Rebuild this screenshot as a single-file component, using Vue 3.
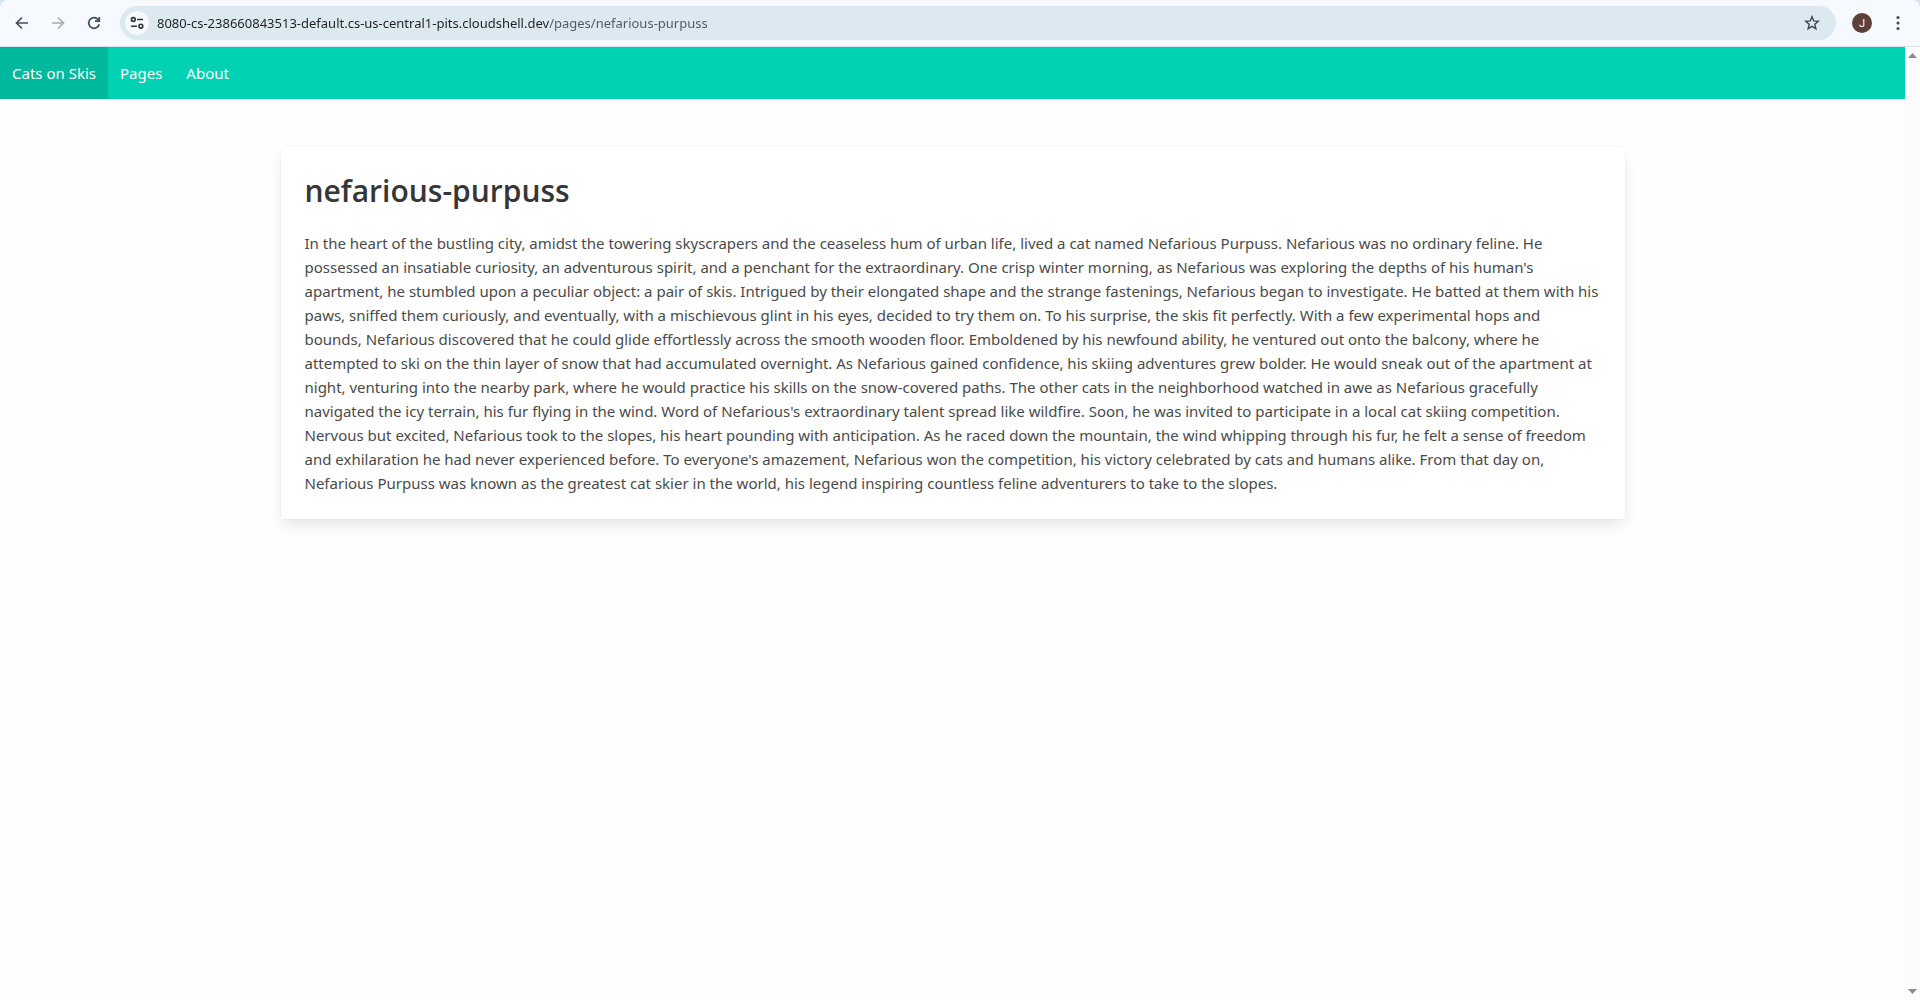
<script setup>
import { ref } from 'vue'

const url = ref('8080-cs-238660843513-default.cs-us-central1-pits.cloudshell.dev/pages/nefarious-purpuss')

const storyLines = [
  'In the heart of the bustling city, amidst the towering skyscrapers and the ceaseless hum of urban life, lived a cat named Nefarious Purpuss. Nefarious was no ordinary feline. He',
  "possessed an insatiable curiosity, an adventurous spirit, and a penchant for the extraordinary. One crisp winter morning, as Nefarious was exploring the depths of his human's",
  'apartment, he stumbled upon a peculiar object: a pair of skis. Intrigued by their elongated shape and the strange fastenings, Nefarious began to investigate. He batted at them with his',
  'paws, sniffed them curiously, and eventually, with a mischievous glint in his eyes, decided to try them on. To his surprise, the skis fit perfectly. With a few experimental hops and',
  'bounds, Nefarious discovered that he could glide effortlessly across the smooth wooden floor. Emboldened by his newfound ability, he ventured out onto the balcony, where he',
  'attempted to ski on the thin layer of snow that had accumulated overnight. As Nefarious gained confidence, his skiing adventures grew bolder. He would sneak out of the apartment at',
  'night, venturing into the nearby park, where he would practice his skills on the snow-covered paths. The other cats in the neighborhood watched in awe as Nefarious gracefully',
  "navigated the icy terrain, his fur flying in the wind. Word of Nefarious's extraordinary talent spread like wildfire. Soon, he was invited to participate in a local cat skiing competition.",
  'Nervous but excited, Nefarious took to the slopes, his heart pounding with anticipation. As he raced down the mountain, the wind whipping through his fur, he felt a sense of freedom',
  "and exhilaration he had never experienced before. To everyone's amazement, Nefarious won the competition, his victory celebrated by cats and humans alike. From that day on,",
  'Nefarious Purpuss was known as the greatest cat skier in the world, his legend inspiring countless feline adventurers to take to the slopes.',
]
</script>

<template>
  <div class="browser">
    <div class="frame">
      <header class="toolbar">
        <button class="tool" type="button" aria-label="Back">
          <svg viewBox="0 0 16 16" width="16" height="16" fill="none" stroke="#40515c" stroke-width="1.7">
            <path d="M14 8H3M8 2.5 2.5 8 8 13.5" />
          </svg>
        </button>
        <button class="tool" type="button" aria-label="Forward" disabled>
          <svg viewBox="0 0 16 16" width="16" height="16" fill="none" stroke="#a9adb1" stroke-width="1.7">
            <path d="M2 8h11M8 2.5 13.5 8 8 13.5" />
          </svg>
        </button>
        <button class="tool" type="button" aria-label="Reload">
          <svg viewBox="0 0 16 16" width="16" height="16" fill="none" stroke="#40515c" stroke-width="1.7">
            <path d="M13.2 9.2A5.3 5.3 0 1 1 12 4.5L13.3 6M13.3 2v4.2H9" />
          </svg>
        </button>
        <div class="omnibox">
          <button class="site-info" type="button" aria-label="View site information">
            <svg viewBox="0 0 16 16" width="16" height="16" fill="none" stroke="#303437" stroke-width="1.6">
              <circle cx="4.3" cy="4.5" r="1.9" />
              <path d="M8 4.5h6M2 11.2h6" />
              <circle cx="11.9" cy="11.2" r="1.9" />
            </svg>
          </button>
          <input v-model="url" class="address" type="text" aria-label="Address and search bar" spellcheck="false" />
          <button class="star" type="button" aria-label="Bookmark this tab">
            <svg viewBox="0 0 18 18" width="18" height="18" fill="none" stroke="#40474c" stroke-width="1.4">
              <path d="m9 2.7 1.7 4.2 4.6.4-3.5 3 1.1 4.5L9 12.4l-3.9 2.4 1.1-4.5-3.5-3 4.6-.4z" />
            </svg>
          </button>
        </div>
        <button class="profile" type="button" aria-label="Profile">J</button>
        <button class="menu" type="button" aria-label="Menu">
          <svg viewBox="0 0 16 16" width="16" height="16" fill="#40515c">
            <circle cx="8" cy="2.5" r="1.6" />
            <circle cx="8" cy="8" r="1.6" />
            <circle cx="8" cy="13.5" r="1.6" />
          </svg>
        </button>
      </header>
    </div>

    <div class="viewport">
      <div class="page">
        <nav class="navbar">
          <a class="nav-item active" href="/">Cats on Skis</a>
          <a class="nav-item" href="/pages">Pages</a>
          <a class="nav-item" href="/about">About</a>
        </nav>
        <main class="section">
          <article class="card">
            <h1 class="title">nefarious-purpuss</h1>
            <p class="story">
              <span v-for="line in storyLines" :key="line" class="line">{{ line }}</span>
            </p>
          </article>
        </main>
      </div>
      <div class="scrollbar">
        <button class="scroll-button" type="button" aria-label="Scroll up">
          <svg viewBox="0 0 9 5" width="9" height="5" fill="#8b8b8b"><path d="M0 5 4.5 0 9 5z" /></svg>
        </button>
        <button class="scroll-button" type="button" aria-label="Scroll down">
          <svg viewBox="0 0 9 5" width="9" height="5" fill="#8b8b8b"><path d="M0 0 4.5 5 9 0z" /></svg>
        </button>
      </div>
    </div>
  </div>
</template>

<style>
body {
  background: #fefefe;
}
</style>

<style scoped>
.browser {
  display: flex;
  flex-direction: column;
  min-height: 100vh;
  font-family: 'Segoe UI', 'Noto Sans', 'Open Sans', sans-serif;
}

button {
  display: flex;
  align-items: center;
  justify-content: center;
  flex: none;
  padding: 0;
  border: 0;
  background: none;
  font-family: inherit;
}

.frame {
  background: #d3e5f2;
}

.toolbar {
  display: flex;
  align-items: center;
  box-sizing: border-box;
  height: 47px;
  padding: 0 12px 0 4px;
  border-bottom: 1px solid #d9e2e9;
  border-radius: 8px 8px 0 0;
  background: #f6f9fe;
}

.tool {
  width: 36px;
  height: 34px;
}

.omnibox {
  display: flex;
  align-items: center;
  flex: 1;
  min-width: 0;
  height: 34px;
  margin-left: 8px;
  padding: 0 15px 0 5px;
  border-radius: 17px;
  background: #dde9f1;
}

.site-info {
  width: 24px;
  height: 24px;
  border-radius: 50%;
  background: #f6f9fe;
}

/* The host is drawn dark and the path after it lighter. */
.address {
  flex: 1;
  min-width: 0;
  height: 24px;
  margin-left: 8px;
  padding: 0;
  border: 0;
  outline: 0;
  color: #1f1f1f;
  background: linear-gradient(to right, #1f1f1f 392px, #50575c 392px);
  background-clip: text;
  -webkit-text-fill-color: transparent;
  font-family: inherit;
  font-size: 13px;
}

.star {
  width: 18px;
  height: 18px;
}

.profile {
  width: 20px;
  height: 20px;
  margin-left: 16px;
  border-radius: 50%;
  color: #fff;
  background: #5d4037;
  font-family: Roboto, sans-serif;
  font-size: 11px;
}

.menu {
  width: 20px;
  height: 24px;
  margin-left: 16px;
}

.viewport {
  display: flex;
  flex: 1;
}

.page {
  flex: 1;
  min-width: 0;
}

.navbar {
  display: flex;
  height: 52px;
  background: #00d1b2;
}

.nav-item {
  display: flex;
  align-items: center;
  padding: 0 12px;
  color: #fff;
  font-size: 15px;
  text-decoration: none;
}

.active {
  background: #00b89c;
}

.section {
  padding: 48px 24px;
}

.card {
  box-sizing: border-box;
  max-width: 1344px;
  margin: 0 auto;
  padding: 24px;
  border-radius: 4px;
  background: #fff;
  box-shadow: 0 8px 16px -2px rgba(10, 10, 10, 0.1), 0 0 0 1px rgba(10, 10, 10, 0.02);
}

.title {
  margin: 0 0 20px;
  color: #363636;
  font-family: 'Segoe UI', 'Open Sans', sans-serif;
  font-size: 30px;
  font-weight: 600;
  line-height: 40px;
}

.story {
  margin: 0;
  color: #4a4a4a;
  font-size: 15px;
  line-height: 24px;
}

.line {
  display: block;
}

.scrollbar {
  display: flex;
  flex-direction: column;
  justify-content: space-between;
  width: 15px;
  background: #fcfcfc;
}

.scroll-button {
  width: 15px;
  height: 17px;
}
</style>
